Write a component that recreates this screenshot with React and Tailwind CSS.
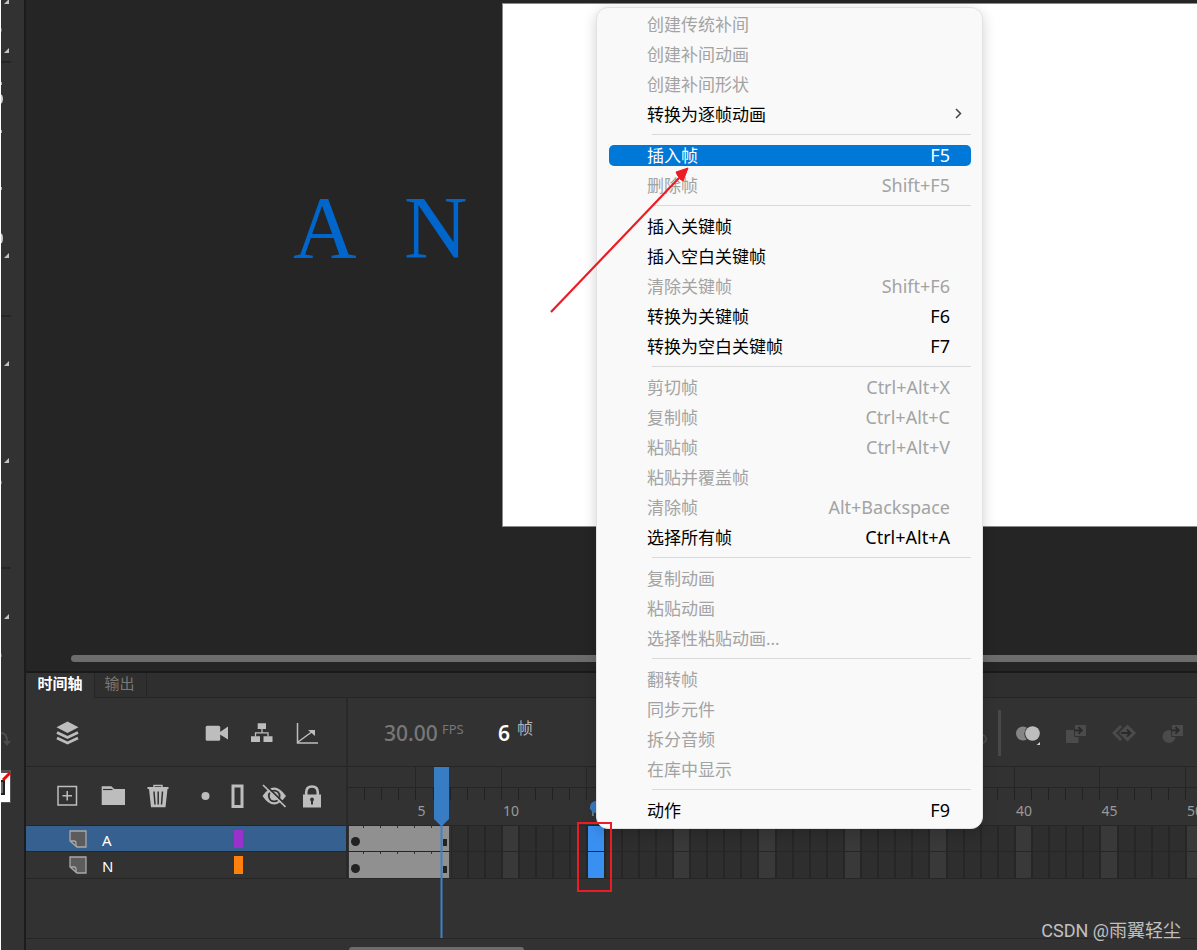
import clsx from 'clsx'

const MENU = [
  [
    { label: '创建传统补间', disabled: true },
    { label: '创建补间动画', disabled: true },
    { label: '创建补间形状', disabled: true },
    { label: '转换为逐帧动画', submenu: true },
  ],
  [
    { label: '插入帧', keys: 'F5', active: true },
    { label: '删除帧', keys: 'Shift+F5', disabled: true },
  ],
  [
    { label: '插入关键帧' },
    { label: '插入空白关键帧' },
    { label: '清除关键帧', keys: 'Shift+F6', disabled: true },
    { label: '转换为关键帧', keys: 'F6' },
    { label: '转换为空白关键帧', keys: 'F7' },
  ],
  [
    { label: '剪切帧', keys: 'Ctrl+Alt+X', disabled: true },
    { label: '复制帧', keys: 'Ctrl+Alt+C', disabled: true },
    { label: '粘贴帧', keys: 'Ctrl+Alt+V', disabled: true },
    { label: '粘贴并覆盖帧', disabled: true },
    { label: '清除帧', keys: 'Alt+Backspace', disabled: true },
    { label: '选择所有帧', keys: 'Ctrl+Alt+A' },
  ],
  [
    { label: '复制动画', disabled: true },
    { label: '粘贴动画', disabled: true },
    { label: '选择性粘贴动画...', disabled: true },
  ],
  [
    { label: '翻转帧', disabled: true },
    { label: '同步元件', disabled: true },
    { label: '拆分音频', disabled: true },
    { label: '在库中显示', disabled: true },
  ],
  [{ label: '动作', keys: 'F9' }],
]

const LAYERS = [
  { name: 'A', swatch: 'bg-[#9932cc]', selected: true },
  { name: 'N', swatch: 'bg-[#ff800d]', selected: false },
]

const FRAMES = Array.from({ length: 50 }, (_, i) => i + 1)
const LAST_FRAME = 6
const PICKED_FRAME = 15

function IconButton({ label, dim, children, className }) {
  return (
    <button
      aria-label={label}
      disabled={dim}
      className={clsx(
        'flex h-8 w-8 shrink-0 items-center justify-center',
        dim ? 'text-[#4b4b4b]' : 'text-[#bdbdbd]',
        className
      )}
    >
      <svg width="24" height="24" viewBox="0 0 24 24" fill="currentColor">
        {children}
      </svg>
    </button>
  )
}

function Corner({ y }) {
  return <path d={`M8 ${y}v5h-5z`} fill="#c4c4c4" />
}

// only the right edge of the tool column is on screen
function ToolStrip() {
  return (
    <aside className="flex w-[26px] shrink-0 flex-col border-r-2 border-l border-r-[#1c1c1c] border-l-white bg-[#323232]">
      <div className="h-[63px] w-[10px] border-b-2 border-[#262626]">
        <svg width="10" height="60" viewBox="0 0 10 60">
          <Corner y={-1} />
          <Corner y={48} />
          <path d="M0 28.500h1v3H0z" fill="#777" />
        </svg>
      </div>
      <div className="h-[254px] w-[10px] border-b-2 border-[#262626]">
        <svg width="10" height="250" viewBox="0 0 10 250">
          <path d="M0 19h1v3H0zM0 67h1v3H0zM0 124h1v3H0z" fill="#aaa" />
          <path d="M0 32q2 4 0 8M0 171q2 4 0 9" stroke="#d0d0d0" strokeWidth="2" fill="none" />
          <Corner y={190} />
        </svg>
      </div>
      <div className="h-[252px] w-[10px] border-b-2 border-[#262626]">
        <svg width="10" height="248" viewBox="0 0 10 248">
          <Corner y={44} />
          <Corner y={141} />
          <path d="M0 164h1v3H0z" fill="#777" />
        </svg>
      </div>
      <div className="w-[10px]">
        <svg width="10" height="240" viewBox="0 0 10 240">
          <Corner y={45} />
          <path d="M0 85h1v3H0z" fill="#666" />
          <path d="M0 164q6 0 6 8" stroke="#4c4c4c" strokeWidth="2" fill="none" />
          <path d="M2 172h8l-4 5z" fill="#4c4c4c" />
          <path d="M0 201h10v33H0z" fill="#555" />
          <path d="M0 204h9v29H0z" fill="#fff" />
          <path d="M0 211h4v15H0z" fill="#222" />
          <path d="M0 213h2v11H0z" fill="#666" />
          <path d="M2 211l7-7" stroke="#f00" strokeWidth="3" />
        </svg>
      </div>
    </aside>
  )
}

function Stage() {
  return (
    <section className="relative flex min-h-[671px] flex-1 flex-col bg-[#252525]">
      <div className="mt-[3px] ml-[476px] h-[524px] border border-r-0 border-[#8a8a8a] bg-white" />
      <span className="absolute top-[178px] left-[267px] font-['Liberation_Serif',serif] text-[88px] leading-[100px] text-[#0066cc]">
        A
      </span>
      <span className="absolute top-[178px] left-[378px] font-['Liberation_Serif',serif] text-[88px] leading-[100px] text-[#0066cc]">
        N
      </span>
      <div className="mt-auto mb-[9px] ml-[45px] h-[7px] rounded-l-full bg-[#6c6c6c]" />
    </section>
  )
}

function LayerTools() {
  return (
    <>
      <div className="flex h-[69px] items-center border-b border-[#262626] pt-0.5 pl-[25px]">
        <IconButton label="图层">
          <path d="M12.500 0.500l11 5.700-11 5.700-11-5.700z" />
          <path d="M2 11.500L12.500 16.500 23 11.500M2 17l10.500 5L23 17" fill="none" stroke="currentColor" strokeWidth="2.800" />
        </IconButton>
        <div className="ml-[118px] flex gap-[13px]">
          <IconButton label="摄像头">
            <rect x="0.700" y="4.700" width="14.500" height="15" rx="1.500" />
            <path d="M15 11l8-5.500v13L15 13.500z" />
          </IconButton>
          <IconButton label="父级视图">
            <path d="M7.700 2.300h8.300V8H7.700zM1 15.300h9V21H1zM13.500 15.300h9V21h-9z" />
            <path d="M12 8v3.700M5.500 15.500v-3.700h12.500v3.700" fill="none" stroke="currentColor" strokeWidth="1.300" />
          </IconButton>
          <IconButton label="图表">
            <path d="M2.500 2v20H23M3 21L18 10" fill="none" stroke="currentColor" strokeWidth="1.500" />
            <path d="M13 9h7v6z" />
          </IconButton>
        </div>
      </div>
      <div className="flex h-[59px] items-center border-b border-[#262626] pl-[25px]">
        <IconButton label="新建图层">
          <path d="M3 2.500h18.500v18.500H3zM12.200 7v9.500M7.500 11.700H17" fill="none" stroke="currentColor" strokeWidth="1.500" />
        </IconButton>
        <IconButton label="新建文件夹" className="ml-[14px]">
          <path d="M0.700 21V2.300h9.600l3 2.700H24v16z" />
          <path d="M2 5.500h9.500" stroke="#323232" strokeWidth="1.200" />
        </IconButton>
        <IconButton label="删除" className="ml-[13px]">
          <path d="M1.500 3h21v2h-21z" />
          <path d="M8 3V1.500h8V3" fill="none" stroke="currentColor" strokeWidth="1.400" />
          <path d="M3 5h18.500L19.500 23.300H5z" />
          <path d="M8 7.500l1 13M12.200 7.500v13M16.500 7.500l-1 13" stroke="#323232" strokeWidth="1.500" />
        </IconButton>
        <IconButton label="突出显示" className="ml-4">
          <circle cx="11.500" cy="12" r="4" />
        </IconButton>
        <IconButton label="轮廓">
          <path d="M7 2h9v20.500H7z" fill="none" stroke="currentColor" strokeWidth="3" />
        </IconButton>
        <IconButton label="显示或隐藏" className="ml-1">
          <path d="M0.500 12Q12 -5 24 12 12 29 0.500 12z" />
          <circle cx="12.200" cy="12" r="6.300" fill="#323232" />
          <circle cx="12.200" cy="12" r="4.500" />
          <path d="M2.500 0L24 21" stroke="#323232" strokeWidth="1.800" />
          <path d="M1 1l22.500 22" stroke="currentColor" strokeWidth="1.700" />
        </IconButton>
        <IconButton label="锁定" className="ml-1.5">
          <path d="M3 10.500h18v13H3z" />
          <path d="M6.200 11V8.500q0-6 5.800-6t5.800 6V11" fill="none" stroke="currentColor" strokeWidth="2.600" />
          <circle cx="12" cy="15.500" r="1.900" fill="#323232" />
          <path d="M11 16h2v4.500h-2z" fill="#323232" />
        </IconButton>
      </div>
    </>
  )
}

function LayerRow({ layer }) {
  return (
    <div
      className={clsx(
        'flex items-center border-b border-[#262626] pl-[43px] text-white',
        layer.selected ? 'h-[26px] bg-[#36608f]' : 'h-[27px]'
      )}
    >
      <svg width="18" height="18" viewBox="0 0 18 18" fill="#5c5c5c" stroke="#a9a9a9" strokeWidth="1.300">
        <path d="M1 1h16v16H8L1 11z" />
        <path d="M1.500 11h3.500q2 0 2 2v3.500" fill="none" />
      </svg>
      <span className="w-[147px] pt-0.5 pl-[15px] text-[15px] leading-5">{layer.name}</span>
      <span className={clsx('h-[18px] w-[9px]', layer.swatch)} />
    </div>
  )
}

function FrameToolbar() {
  return (
    <div className="flex h-[69px] items-center overflow-hidden border-b border-[#262626] pt-0.5 pl-9 whitespace-nowrap">
      <span className="w-[58px] text-[21px] leading-6 font-medium text-[#777]">30.00</span>
      <span className="w-14 pb-2 text-[13px] leading-4 text-[#777]">FPS</span>
      <span className="w-[19px] text-[21px] leading-6 font-semibold text-white">6</span>
      <span className="pb-2.5 text-[16px] leading-5 text-[#b4b4b4]">帧</span>
      <div className="ml-[449px] flex shrink-0 items-center">
        <svg className="shrink-0" width="16" height="24" viewBox="0 0 16 24" fill="none" stroke="#4a4a4a" strokeWidth="2">
          <circle cx="0" cy="18" r="4" />
        </svg>
        <span className="h-[46px] w-[3px] bg-[#484848]" />
        <IconButton label="绘图纸外观" className="ml-[11px]">
          <circle cx="7" cy="12.500" r="7" fill="#858585" />
          <circle cx="16.500" cy="12.500" r="8.200" fill="#323232" />
          <circle cx="16.500" cy="12.500" r="7.300" />
          <path d="M24 21v3.500h-4z" fill="#d0d0d0" />
        </IconButton>
        <IconButton label="插入关键帧" dim className="ml-4">
          <path d="M2 9h12.500v13H2z" />
          <path d="M10.500 3.500H22.500v12H10.500z" stroke="#323232" />
          <path d="M10 9.300h7M14.500 6l3.300 3.300-3.300 3.300" fill="none" stroke="#2a2a2a" strokeWidth="1.800" />
        </IconButton>
        <IconButton label="插入空白关键帧" dim className="ml-4">
          <path d="M8 4L0 12l8 8 2-2-6-6 6-6z" />
          <path d="M15.500 3.500L24 12l-8.500 8.500L7 12z" />
          <path d="M9 12h9M15 8.500l3.500 3.500-3.500 3.500" fill="none" stroke="#2a2a2a" strokeWidth="1.800" />
        </IconButton>
        <IconButton label="插入帧" dim className="ml-[18px]">
          <circle cx="7" cy="15.500" r="6.500" />
          <path d="M9.500 3.500H21.500v12H9.500z" stroke="#323232" />
          <path d="M9 9.300h7M13.500 6l3.300 3.300-3.300 3.300" fill="none" stroke="#2a2a2a" strokeWidth="1.800" />
        </IconButton>
      </div>
    </div>
  )
}

function Ruler() {
  return (
    <div className="h-[59px] overflow-hidden border-b border-[#262626]">
      <div className="grid w-[855px] grid-cols-[repeat(50,minmax(0,1fr))]">
        {FRAMES.map(n => (
          <div key={n} className="text-[14px] leading-5 text-[#999]">
            <div className={clsx('h-[21px] border-b border-[#262626]', n % 5 === 4 && 'border-r')} />
            <div className="h-3 border-r border-[#222]" />
            {n % 5 === 0 && <span className="block pt-px pl-px whitespace-nowrap">{n}</span>}
          </div>
        ))}
      </div>
    </div>
  )
}

function FrameRow({ selected }) {
  return (
    <div className={clsx('overflow-hidden border-b border-[#262626]', selected ? 'h-[26px]' : 'h-[27px]')}>
      <div className="grid h-full w-[855px] grid-cols-[repeat(50,minmax(0,1fr))]">
        <div className="relative col-span-6 mr-0.5 ml-px flex items-end justify-between bg-[#909090] pr-0.5 pb-1 pl-0.5">
          <span className="mb-px h-[9px] w-[9px] rounded-full bg-[#222]" />
          <span className="mb-px h-[7px] w-1 bg-[#222]" />
          <div className="absolute inset-x-0 top-0 flex gap-4 pl-[14px]">
            {FRAMES.slice(1, LAST_FRAME).map(n => (
              <span key={n} className="h-0.5 w-px bg-[#333]" />
            ))}
          </div>
        </div>
        {FRAMES.slice(LAST_FRAME).map(n => (
          <div
            key={n}
            className={clsx(
              'border-x border-[#262626]',
              n === PICKED_FRAME ? 'bg-[#3a90f0]' : n % 5 === 0 ? 'bg-[#393939]' : 'bg-[#2e2e2e]'
            )}
          />
        ))}
      </div>
    </div>
  )
}

function Timeline() {
  return (
    <section className="border-t-2 border-[#1a1a1a] bg-[#323232]">
      <div className="flex h-[25px] text-[15px] leading-5">
        <button className="w-[69px] border-r border-[#262626] pb-2 font-bold text-white">时间轴</button>
        <button className="w-[52px] border-r border-b border-[#262626] bg-[#2f2f2f] pr-0.5 pb-2 text-[#777]">输出</button>
        <div className="flex-1 border-b border-[#262626] bg-[#2f2f2f]" />
      </div>
      <div className="grid grid-cols-[322px_minmax(0,1fr)]">
        <div className="border-r-2 border-[#292929]">
          <LayerTools />
          {LAYERS.map(layer => (
            <LayerRow key={layer.name} layer={layer} />
          ))}
        </div>
        <div>
          <FrameToolbar />
          <div className="relative">
            <Ruler />
            {LAYERS.map(layer => (
              <FrameRow key={layer.name} selected={layer.selected} />
            ))}
            <svg className="absolute top-0 left-[86px]" width="15" height="171" viewBox="0 0 15 171">
              <path d="M0 0h15v52l-6 6H6l-6-6z" fill="#387cc4" />
              <path d="M6.500 57h2v114h-2z" fill="#3d82cc" />
            </svg>
            <svg className="absolute top-[33px] left-[241px]" width="14" height="14" viewBox="0 0 14 14">
              <circle cx="7" cy="7" r="6" fill="#387cc4" />
            </svg>
          </div>
        </div>
      </div>
      <div className="h-[60px] border-b border-[#262626]" />
      <div className="flex h-[11px] items-end overflow-hidden pl-[323px]">
        <div className="h-[3px] w-[175px] rounded-t-full bg-[#6c6c6c]" />
      </div>
    </section>
  )
}

function MenuItem({ item }) {
  return (
    <button role="menuitem" disabled={item.disabled} className="flex h-[30px] w-full items-center pr-[11px] pl-3">
      <span
        className={clsx(
          'flex h-[21px] flex-1 items-center justify-between rounded-[5px] pr-[21px] pl-[38px]',
          item.active && 'bg-[#0078d7] text-white',
          item.disabled && 'text-[#a3a3a3]'
        )}
      >
        <span>{item.label}</span>
        {item.keys && <span className="text-[18px]">{item.keys}</span>}
        {item.submenu && (
          <svg className="-mr-4" width="12" height="12" viewBox="0 0 12 12" fill="none" stroke="#444" strokeWidth="1.500">
            <path d="M2 1l4.500 4.500L2 10" />
          </svg>
        )}
      </span>
    </button>
  )
}

function ContextMenu() {
  return (
    <div
      role="menu"
      className="absolute top-[7px] left-[596px] w-[387px] rounded-xl border border-[#e2e2e2] bg-[#f9f9f9] pt-px pb-[3px] font-['Noto_Sans','Noto_Sans_CJK_SC',sans-serif] text-[17px] leading-[21px] text-black shadow-[0_4px_14px_rgba(0,0,0,0.18)]"
    >
      {MENU.map((group, i) => (
        <div key={group[0].label}>
          {i > 0 && <hr className="my-[5px] mr-[11px] ml-[55px] border-[#dadada]" />}
          {group.map(item => (
            <MenuItem key={item.label} item={item} />
          ))}
        </div>
      ))}
    </div>
  )
}

export default function App() {
  return (
    <div className="relative flex min-h-screen overflow-hidden bg-[#323232] font-['Noto_Sans','Noto_Sans_CJK_SC',sans-serif]">
      <ToolStrip />
      <main className="flex min-w-0 flex-1 flex-col">
        <Stage />
        <Timeline />
      </main>

      <ContextMenu />

      <svg className="absolute top-[160px] left-[545px]" width="150" height="160" viewBox="0 0 150 160">
        <path d="M6 152L134 18" stroke="#ed1c24" strokeWidth="2.200" />
        <path d="M143 8l-5 13-4-3-3-5z" fill="#ed1c24" />
        <path d="M143 8l-12 4 2 4 2 3 3 2z" fill="#ed1c24" stroke="#ed1c24" />
      </svg>
      <div className="absolute top-[822px] left-[577px] h-[70px] w-[35px] border-2 border-[#ed1c24]" />
      <p className="absolute right-4 bottom-[7px] font-['Roboto','Noto_Sans_CJK_SC',sans-serif] text-[18px] leading-6 text-[#c0c0c0]">
        CSDN @雨翼轻尘
      </p>
    </div>
  )
}
